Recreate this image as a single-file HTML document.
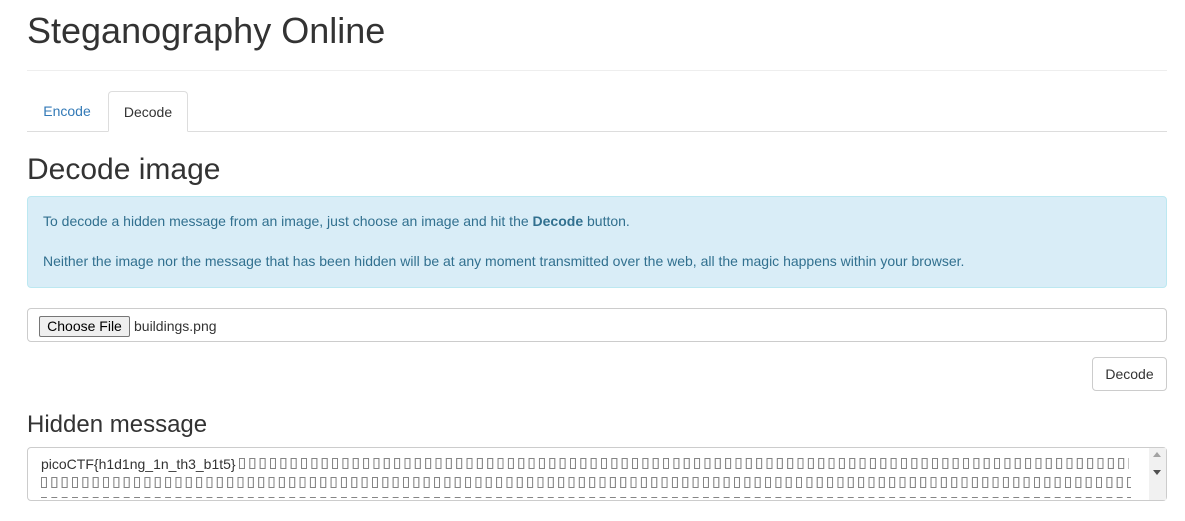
<!DOCTYPE html>
<html><head><style>
*{box-sizing:border-box;margin:0;padding:0}
body{width:1185px;height:521px;overflow:hidden;background:#fff;font-family:"Liberation Sans",Arial,sans-serif;color:#333;font-size:14px;position:relative}
.a{position:absolute}
h1{position:absolute;left:27px;top:11px;font-size:36px;font-weight:400;line-height:40px}
.hr{left:27px;width:1140px;top:70px;border-top:1px solid #eee}
.tabline{left:27px;width:1140px;top:131px;border-top:1px solid #ddd}
.tab{top:91px;height:41px;line-height:41px;text-align:center;font-size:14px}
.t1{left:27px;width:80px;color:#337ab7}
.t2{left:108px;width:80px;border:1px solid #ddd;border-bottom:1px solid #fff;border-radius:4px 4px 0 0;background:#fff}
h2{position:absolute;left:27px;top:153px;font-size:30px;font-weight:400;line-height:34px}
.alert{left:27px;top:196px;width:1140px;height:92px;background:#d9edf7;border:1px solid #bce8f1;border-radius:4px;color:#31708f;padding:14px 15px;line-height:20px}
.file{left:27px;top:308px;width:1140px;height:34px;border:1px solid #ccc;border-radius:4px}
.cf{left:39px;top:316px;width:91px;height:21px;border:1px solid #767676;border-radius:2px;background:#efefef;font-size:14px;line-height:19px;text-align:center;color:#000}
.fn{left:134px;top:318px;line-height:16px}
.btn{left:1092px;top:357px;width:75px;height:34px;border:1px solid #ccc;border-radius:4px;text-align:center;line-height:32px}
h3{position:absolute;left:27px;top:411px;font-size:24px;font-weight:400;line-height:28px}
.ta{left:27px;top:447px;width:1140px;height:54px;border:1px solid #ccc;border-radius:4px;overflow:hidden}
.l1{left:41px;top:455px;line-height:18px;color:#333}
.bx{position:absolute;height:11px;background-image:linear-gradient(90deg,#666 1px,transparent 1px,transparent 5px,#666 5px,#666 6px,transparent 6px),linear-gradient(90deg,#666 6px,transparent 6px);background-size:10.35px 11px,10.35px 11px;opacity:.8}
.bx::after{content:"";position:absolute;left:0;right:0;top:1px;bottom:1px;background:linear-gradient(90deg,transparent 1px,#fff 1px,#fff 5px,transparent 5px);background-size:10.35px 9px}
.dash{position:absolute;height:1px;background:linear-gradient(90deg,#666 6px,transparent 6px);background-size:10.35px 1px;opacity:.8}
.sb{left:1149px;top:448px;width:17px;height:52px;background:#f1f1f1}
</style></head><body>
<h1>Steganography Online</h1>
<div class="a hr"></div>
<div class="a tabline"></div>
<div class="a tab t1">Encode</div>
<div class="a tab t2">Decode</div>
<h2>Decode image</h2>
<div class="a alert">To decode a hidden message from an image, just choose an image and hit the <b>Decode</b> button.<br><br>Neither the image nor the message that has been hidden will be at any moment transmitted over the web, all the magic happens within your browser.</div>
<div class="a file"></div>
<div class="a cf">Choose File</div>
<div class="a fn">buildings.png</div>
<div class="a btn">Decode</div>
<h3>Hidden message</h3>
<div class="a ta"></div>
<div class="a l1">picoCTF{h1d1ng_1n_th3_b1t5}</div>
<div class="bx" style="left:239px;top:458px;width:890px"></div>
<div class="bx" style="left:41px;top:477px;width:1090px"></div>
<div class="dash" style="left:41px;top:497px;width:1090px"></div>
<div class="a sb"></div>
<div class="a" style="left:1153px;top:452px;border:4px solid transparent;border-bottom:5px solid #a3a3a3;border-top:0"></div>
<div class="a" style="left:1153px;top:470px;border:4px solid transparent;border-top:5px solid #505050;border-bottom:0"></div>
</body></html>
